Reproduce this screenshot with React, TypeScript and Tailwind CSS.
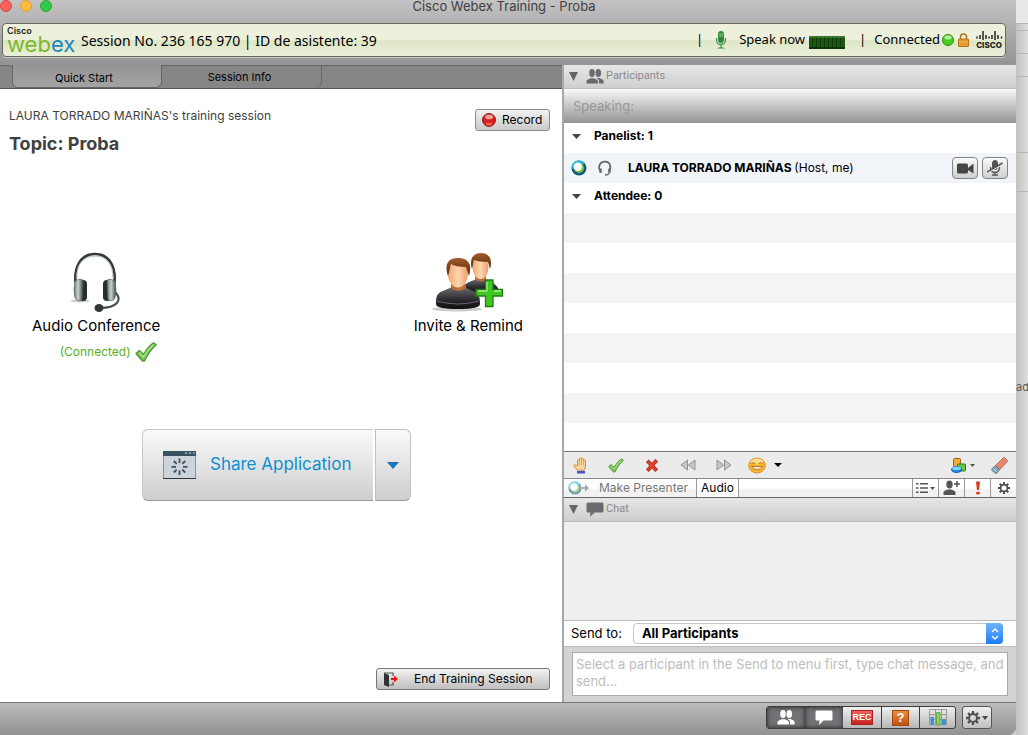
import React, { useState } from "react";

const stripes = Array.from({ length: 8 }, (_, i) => i);

function PeopleIcon({ className }: { className?: string }) {
  return (
    <svg viewBox="0 0 18 15" className={className} fill="currentColor" aria-hidden="true">
      <ellipse cx="6" cy="4" rx="2.8" ry="3.9" />
      <ellipse cx="12.300" cy="4" rx="2.8" ry="3.9" />
      <path d="M0.5 14.5v-2.3c0-1.5 2.5-2 4-3h3.400c1.500 1 4 1.500 4 3v2.3z" />
      <path d="M11 9h2.600c1.500 1 4 1.600 4 3v2.500h-4.600V12c0-1.300-.8-1.700-2-2.400z" />
    </svg>
  );
}

function BubbleIcon({ className }: { className?: string }) {
  return (
    <svg viewBox="0 0 18 15" className={className} fill="currentColor" aria-hidden="true">
      <path d="M2 .5h14q1.500 0 1.500 1.500v7q0 1.500-1.500 1.500H8.500L4 15l.5-4.500H2Q.5 10.500.5 9V2Q.5.500 2 .5z" />
    </svg>
  );
}

function Caret({ className }: { className?: string }) {
  return (
    <svg viewBox="0 0 10 6" preserveAspectRatio="none" className={className} fill="currentColor" aria-hidden="true">
      <path d="M0 0h10L5 6z" />
    </svg>
  );
}

function CheckIcon({ className }: { className?: string }) {
  return (
    <svg viewBox="0 0 22 20" className={className} aria-hidden="true">
      <path
        d="M1 11.500 4.500 8.500l4 4C11 8 14.500 3.500 18.500 .8l2.700 2C16.500 7 12.500 12.500 9.500 19H7.500z"
        fill="#7cc653"
        stroke="#4a9a35"
        strokeWidth="1.300"
        strokeLinejoin="round"
      />
      <path d="M4.500 10.500 8.500 15C11.500 9.500 14.500 6 18.500 2.800" fill="none" stroke="#b5e594" strokeWidth="1.200" />
    </svg>
  );
}

function BallIcon({ className, faded }: { className?: string; faded?: boolean }) {
  return (
    <svg viewBox="0 0 16 16" className={className} opacity={faded ? 0.55 : 1} aria-hidden="true">
      <circle cx="8" cy="8" r="7.500" fill="#0a5f78" />
      <path d="M.5 9A7.500 7.500 0 0 1 13.500 3L8 8z" fill="#22b7e2" />
      <circle cx="8" cy="8" r="5" fill="#7cbb4c" />
      <circle cx="6.800" cy="6.800" r="4.200" fill="#fff" />
    </svg>
  );
}

function SmallHeadset() {
  return (
    <svg viewBox="0 0 14 15" className="h-4 w-4" fill="none" stroke="#666" aria-hidden="true">
      <path d="M3.500 11.500C-.5 7 2 1.500 7 1.500S13.500 7 10.500 11.500" strokeWidth="1.600" />
      <path d="M2.800 8v4M11.200 8v4" strokeWidth="2.200" />
      <path d="M11 12.500Q10 14 7 14" strokeWidth="1.500" />
    </svg>
  );
}

function HeadsetArt() {
  return (
    <svg viewBox="0 0 52 62" className="h-[62px] w-[52px]" aria-hidden="true">
      <defs>
        <linearGradient id="cup" x1="0" x2="1">
          <stop offset="0" stopColor="#6d7876" />
          <stop offset=".45" stopColor="#c9d2cf" />
          <stop offset="1" stopColor="#424a4a" />
        </linearGradient>
      </defs>
      <ellipse cx="10" cy="49" rx="10" ry="1.500" fill="#ccc" />
      <path d="M5.500 31C4 14 11 2 25 2s21 12 19.500 29" fill="none" stroke="#343b3c" strokeWidth="2.600" />
      <path d="M7 26C6 13 13 4 25 4s18 9 18 22" fill="none" stroke="#b5bab9" strokeWidth="1" />
      <path d="M45 40c8 8 2 16-15 16" fill="none" stroke="#454d4d" strokeWidth="2" />
      <rect x="9" y="28" width="8" height="21" rx="4" fill="#282d2e" />
      <rect x="33" y="28" width="8" height="21" rx="4" fill="#282d2e" />
      <path d="M5 29q4-3 8-1l-1 20q-5 2-7-2-2-8 0-17z" fill="url(#cup)" stroke="#535d5c" strokeWidth=".7" />
      <path d="M45 29q-4-3-8-1l1 20q5 2 7-2 2-8 0-17z" fill="url(#cup)" stroke="#535d5c" strokeWidth=".7" />
      <ellipse cx="29" cy="56" rx="4.500" ry="4" fill="#303738" />
    </svg>
  );
}

function InviteArt() {
  return (
    <svg viewBox="0 0 72 62" className="h-[62px] w-[72px]" aria-hidden="true">
      <defs>
        <linearGradient id="shirt" x1="0" x2="0" y1="0" y2="1">
          <stop offset="0" stopColor="#6b6b70" />
          <stop offset=".6" stopColor="#29292d" />
          <stop offset="1" stopColor="#0e0e10" />
        </linearGradient>
        <linearGradient id="skin" x1="0" x2="1" y1="0" y2="0">
          <stop offset="0" stopColor="#efa66f" />
          <stop offset=".5" stopColor="#ffd5ae" />
          <stop offset="1" stopColor="#e99f69" />
        </linearGradient>
        <linearGradient id="hair" x1="0" x2="0" y1="0" y2="1">
          <stop offset="0" stopColor="#a45c2c" />
          <stop offset="1" stopColor="#54250c" />
        </linearGradient>
      </defs>
      <ellipse cx="25" cy="57" rx="25" ry="2.500" fill="#ccc" />
      <path d="M30 38c4-9 9-8 14-11h10c5 4 11 4 13 12v2H30z" fill="url(#shirt)" />
      <path d="M43 22h11v5q-5 5-11 0z" fill="#ba6c3b" />
      <ellipse cx="48.500" cy="15.500" rx="8" ry="11.500" fill="url(#skin)" />
      <path d="M40 17c-3-10 1-16 9-16s12 6 9 16l-2-7c-6 0-11-1-14-2z" fill="url(#hair)" />
      <path d="M4 52c0-8 1-11 7-13l9-4h12l9 4c6 2 7 6 7 13q0 5-22 5T4 52z" fill="url(#shirt)" />
      <path d="M5 49q21 6 42 0" fill="none" stroke="#65656a" strokeWidth="1" />
      <path d="M19 32h15v4q-7 6-15 0z" fill="#ba6c3b" />
      <ellipse cx="26" cy="22" rx="10" ry="13.500" fill="url(#skin)" />
      <path d="M16 24C12 11 17 6 26 6s15 5 11 18l-3-9c-7 0-12-1-15-3z" fill="url(#hair)" />
      <path
        d="M53.500 28h7.500v9.500h9.500V44H61v10.500h-7.500V44H44v-6.500h9.500z"
        fill="#3fc724"
        stroke="#217d12"
        strokeWidth="1.300"
      />
      <path d="M55 30v9h-9M62 39h7" fill="none" stroke="#a4f083" strokeWidth="1.300" />
    </svg>
  );
}

function WebexLogo() {
  return (
    <div className="flex w-[72px] shrink-0 flex-col font-['Inter',sans-serif]" aria-label="Cisco Webex">
      <span className="h-2 text-[9px] font-semibold leading-[8px] text-[#222]">Cisco</span>
      <span className="h-[18px] text-[22px] leading-[18px] text-[#7ab929]">
        web<span className="text-[#1b87c1]">ex</span>
      </span>
    </div>
  );
}

function CiscoLogo() {
  return (
    <div className="flex w-7 flex-col items-center">
      <svg viewBox="0 0 27 10" className="h-[10px] w-[27px]" stroke="#222" strokeWidth="1.500" aria-hidden="true">
        <path d="M1 5.500v2M4 4v4M7 0v9M10 4v4M13 5.500v2M16 4v4M19 0v9M22 4v4M25.500 5.500v2" />
      </svg>
      <span className="font-['Inter',sans-serif] text-[8px] font-extrabold leading-[9px] text-[#222]">CISCO</span>
    </div>
  );
}

function StatusBar() {
  return (
    <div className="ml-0.5 mr-[10px] flex h-[34px] shrink-0 items-center rounded border border-[#686b5c] bg-linear-to-b from-[#edf1dc] from-50% via-[#dde5c6] via-52% to-[#ebf0d8] pl-1 pr-0.5 font-['Noto_Sans','Lucida_Grande',sans-serif] text-[13px] text-black shadow-[0_1px_0_#c8c8c8]">
      <WebexLogo />
      <span className="ml-0.5 whitespace-nowrap text-[14px]">Session No. 236 165 970 | ID de asistente: 39</span>
      <div className="ml-auto flex items-center whitespace-nowrap">
        <span>|</span>
        <svg viewBox="0 0 12 18" className="ml-3 h-[18px] w-3" aria-hidden="true">
          <rect x="3" y="0" width="6" height="12" rx="3" fill="#2f8a3a" />
          <path d="M4 3h4M4 5h4" stroke="#9ecb9c" />
          <path d="M1.500 7v2a4.500 4.500 0 0 0 9 0V7M6 14v2" fill="none" stroke="#4c9653" strokeWidth="1.300" />
          <path d="M2 17.500q4-3 8 0z" fill="#2f9e3a" />
        </svg>
        <span className="ml-3">Speak now</span>
        <svg viewBox="0 0 36 13" className="ml-1 mt-1 h-[13px] w-9" aria-hidden="true">
          <rect width="36" height="13" rx="1" fill="#1d5511" />
          <path
            d="M3.500 2v10M7.500 2v10M11.500 2v10M15.500 2v10M19.500 2v10M23.500 2v10M27.500 2v10M31.500 2v10"
            stroke="#0e3a06"
          />
          <path d="M0 1h36" stroke="#5b9448" />
          <path d="M0 12h36" stroke="#0c3205" strokeWidth="2" />
        </svg>
        <span className="ml-3.5">|</span>
        <span className="ml-2">Connected</span>
        <svg viewBox="0 0 12 12" className="ml-0.5 h-3 w-3" aria-hidden="true">
          <circle cx="6" cy="6" r="5.500" fill="#43cf1d" stroke="#318c1e" />
          <ellipse cx="6" cy="3.600" rx="3.500" ry="2" fill="#b9f5a0" />
        </svg>
        <svg viewBox="0 0 11 14" className="ml-1 mr-1.5 h-3.5 w-[11px]" aria-hidden="true">
          <path d="M2.500 7V4a3 3 0 0 1 6 0v3" fill="none" stroke="#aa762c" strokeWidth="1.500" />
          <rect x=".5" y="6" width="10" height="7.500" rx=".5" fill="#e39a34" stroke="#b97219" />
          <path d="M1 9h9" stroke="#f3b65c" />
        </svg>
        <CiscoLogo />
      </div>
    </div>
  );
}

function PanelHeader({ title, icon }: { title: string; icon: React.ReactNode }) {
  return (
    <button
      type="button"
      className="flex h-6 w-full shrink-0 items-center border-b border-[#bdbdbd] bg-linear-to-b from-[#e6e6e6] to-[#cfcfcf] pl-[5px] font-['Roboto',sans-serif] text-[11px] text-[#8b8b8b]"
    >
      <Caret className="h-[9px] w-[9px] text-[#666]" />
      <span className="ml-2 mr-0.5 text-[#6b6b6b]">{icon}</span>
      {title}
    </button>
  );
}

function QuickStart() {
  return (
    <main className="flex flex-1 flex-col bg-white pb-3 text-black">
      <div className="flex items-start justify-between pl-[9px] pr-3 pt-5">
        <div className="text-[#404040]">
          <p className="text-[12px] leading-[14px]">LAURA TORRADO MARIÑAS's training session</p>
          <h1 className="mt-2.5 text-[18px] font-bold leading-[22px]">Topic: Proba</h1>
        </div>
        <button
          type="button"
          className="flex h-[22px] w-[75px] items-center gap-1.5 rounded-[3px] border border-[#8c8c8c] bg-linear-to-b from-[#f2f2f2] to-[#c9c9c9] pl-1.5 text-[12px]"
        >
          <svg viewBox="0 0 14 14" className="h-3.5 w-3.5" aria-hidden="true">
            <circle cx="7" cy="7" r="6.500" fill="#d91e1e" stroke="#902020" />
            <ellipse cx="7" cy="4" rx="4" ry="2.300" fill="#f3a09a" />
            <ellipse cx="7" cy="11" rx="3" ry="1.500" fill="#f0603f" />
          </svg>
          Record
        </button>
      </div>

      <div className="mt-[97px] flex items-start justify-between pl-8 pr-[39px]">
        <div className="flex flex-col items-center">
          <button type="button" className="flex flex-col items-center text-[15px] leading-5">
            <HeadsetArt />
            <span className="mt-0.5">Audio Conference</span>
          </button>
          <div className="mt-1.5 flex items-center gap-1 pl-6 text-[12px] text-[#5aaf1e]">
            (Connected)
            <CheckIcon className="h-5 w-[22px]" />
          </div>
        </div>
        <button type="button" className="flex flex-col items-center text-[15px] leading-5">
          <InviteArt />
          <span className="mt-0.5">Invite &amp; Remind</span>
        </button>
      </div>

      <div className="mt-[67px] flex justify-center gap-0.5 pr-[9px]">
        <button
          type="button"
          className="flex h-[72px] w-[231px] items-center rounded-l-md border border-r-0 border-[#c8c8c8] border-b-[#999] bg-linear-to-b from-[#fafafa] to-[#cecece] pl-5 text-[17px] text-[#0b8fd0]"
        >
          <svg viewBox="0 0 33 28" className="mr-3.5 h-7 w-[33px]" aria-hidden="true">
            <rect x=".5" y=".5" width="32" height="27" fill="#ccd3da" stroke="#88929a" />
            <path d="M0 0h33v5H0z" fill="#3b5260" />
            <path d="M22 2h2M26 2h2M30 2h1.500" stroke="#dde7ec" />
            <path d="M0 27.500h33" stroke="#30383e" />
            <path
              d="M16.500 7.500v4.500M16.500 19.500V24M8.500 15.800H13M20 15.800h4.500M10.800 10l2.900 2.900M19.300 18.600l2.900 2.900M22.200 10l-2.900 2.900M13.700 18.600l-2.900 2.900"
              stroke="#3c505c"
              strokeWidth="1.800"
            />
          </svg>
          Share Application
        </button>
        <button
          type="button"
          aria-label="More share options"
          className="flex h-[72px] w-9 items-center justify-center rounded-r-md border border-[#c0c0c0] border-b-[#999] bg-linear-to-b from-[#fafafa] to-[#cecece]"
        >
          <Caret className="h-[7px] w-3 text-[#1b75b8]" />
        </button>
      </div>

      <div className="mt-auto flex justify-end pr-3">
        <button
          type="button"
          className="flex h-[22px] w-[174px] items-center rounded-[3px] border border-[#777] bg-linear-to-b from-[#f2f2f2] to-[#bfbfbf] pl-1.5 text-[12px]"
        >
          <svg viewBox="0 0 15 15" className="mr-4 h-[15px] w-[15px]" aria-hidden="true">
            <path d="M1 1h9v3M10 10v3H6" fill="none" stroke="#555" strokeWidth="1.200" />
            <path d="M1 1l5 2v12l-5-2z" fill="#333" />
            <path d="M8 7h4" stroke="#e11" strokeWidth="2.200" />
            <path d="M11 3.500 15 7l-4 3.500z" fill="#e11" />
          </svg>
          End Training Session
        </button>
      </div>
    </main>
  );
}

function ParticipantList() {
  return (
    <div className="flex-1 bg-white text-[12px] font-bold text-black">
      <div className="flex h-[30px] items-center pb-1 pl-2">
        <Caret className="mr-[13px] h-[5px] w-[9px] text-[#444]" />
        Panelist: 1
      </div>
      <div className="flex h-[30px] items-center bg-[#f1f5fa] pl-[7px] pr-2">
        <BallIcon className="mr-2.5 h-4 w-4" />
        <SmallHeadset />
        <span className="ml-[15px]">
          LAURA TORRADO MARIÑAS <span className="font-normal">(Host, me)</span>
        </span>
        <button
          type="button"
          aria-label="Camera"
          className="ml-auto flex h-[22px] w-[26px] items-center justify-center rounded border border-[#858585] bg-linear-to-b from-[#fafafa] to-[#cfcfcf]"
        >
          <svg viewBox="0 0 17 11" className="h-[11px] w-[17px]" fill="#454545" aria-hidden="true">
            <rect x="0" y=".5" width="11" height="10" rx="1.500" />
            <path d="M11 5l5.500-4.500v10L11 7z" />
          </svg>
        </button>
        <button
          type="button"
          aria-label="Muted microphone"
          className="ml-1 flex h-[22px] w-[26px] items-center justify-center rounded border border-[#858585] bg-linear-to-b from-[#fafafa] to-[#cfcfcf]"
        >
          <svg viewBox="0 0 16 16" className="h-4 w-4" fill="none" stroke="#555" aria-hidden="true">
            <rect x="5.500" y="0.500" width="5" height="9" rx="2.500" fill="#555" />
            <path d="M3.500 7v1a4.500 4.500 0 0 0 9 0V7M8 12.500v2M5 15h6" strokeWidth="1.400" />
            <path d="M0 13.200 15.500 4.200" stroke="#eee" strokeWidth="1.200" />
            <path d="M0 12 15.500 3" strokeWidth="1.500" />
          </svg>
        </button>
      </div>
      <div className="flex h-[30px] items-center pb-1 pl-2">
        <Caret className="mr-[13px] h-[5px] w-[9px] text-[#444]" />
        Attendee: 0
      </div>
      {stripes.map((i) => (
        <div key={i} className={`${i % 2 === 0 ? "bg-[#f4f4f4]" : "bg-white"} ${i === 7 ? "h-7" : "h-[30px]"}`} />
      ))}
    </div>
  );
}

function FeedbackBar() {
  return (
    <div className="flex h-[27px] shrink-0 items-center border-t border-[#777] bg-[#ebebeb] pl-[9px] pr-2">
      <button type="button" aria-label="Raise hand">
        <svg viewBox="0 0 16 17" className="h-[17px] w-4" aria-hidden="true">
          <path
            d="M4 13 1 9q0-2 2-1l1.500 1V3q1-1.500 2 0V1.500q1-1.500 2 0V2q1-1.500 2 0v1.500q1-1.500 2 0V10l-1.500 3.500z"
            fill="#fad49c"
            stroke="#c08846"
            strokeWidth=".9"
          />
          <path d="M6.500 3v5M8.500 2v6M10.500 3v5" stroke="#d29b58" strokeWidth=".7" />
          <path d="M4 14h8v2.500H4z" fill="#4a54c9" />
        </svg>
      </button>
      <button type="button" aria-label="Yes" className="ml-[19px]">
        <CheckIcon className="h-[15px] w-4" />
      </button>
      <button type="button" aria-label="No" className="ml-5">
        <svg viewBox="0 0 16 16" className="h-[15px] w-4" aria-hidden="true">
          <path d="M3 3 13 13.500M13 2.500 3 13.500" stroke="#a82414" strokeWidth="4" />
          <path d="M3.500 3.500 12.500 13M12.500 3 3.500 13" stroke="#e8432b" strokeWidth="2.500" />
        </svg>
      </button>
      <button type="button" aria-label="Go slower" className="ml-5">
        <svg viewBox="0 0 16 12" className="h-3 w-4" fill="#c8c8c8" stroke="#929292" aria-hidden="true">
          <path d="M7.500 1v10L1 6zM15 1v10L8.500 6z" />
        </svg>
      </button>
      <button type="button" aria-label="Go faster" className="ml-5">
        <svg viewBox="0 0 16 12" className="h-3 w-4" fill="#c8c8c8" stroke="#929292" aria-hidden="true">
          <path d="M1 1v10l6.500-5zM8.500 1v10L15 6z" />
        </svg>
      </button>
      <button type="button" aria-label="Emoticons" className="ml-4 flex items-center">
        <svg viewBox="0 0 18 17" className="h-[17px] w-[18px]" aria-hidden="true">
          <ellipse cx="9" cy="8.500" rx="8.300" ry="7.500" fill="#f8b52c" stroke="#d98d28" />
          <ellipse cx="9" cy="4.500" rx="6" ry="3" fill="#ffe08c" />
          <path d="M3.500 6.500q2-1.500 4 0M10.500 6.500q2-1.500 4 0" fill="none" stroke="#9a5312" strokeWidth=".9" />
          <path d="M3.500 9.500h11q-1.500 3-5.500 3t-5.500-3z" fill="#fff3cf" stroke="#a65d16" strokeWidth=".8" />
        </svg>
        <Caret className="ml-2 h-1 w-2" />
      </button>
      <button type="button" aria-label="Annotation" className="ml-auto flex items-center">
        <svg viewBox="0 0 15 15" className="h-[15px] w-[15px]" aria-hidden="true">
          <rect x="2.500" y=".5" width="7" height="8" rx="1" fill="#f5ac37" stroke="#9c6311" />
          <rect x="6.500" y="6" width="8" height="7" rx="1" fill="#68c83d" stroke="#2a7c19" />
          <ellipse cx="5.500" cy="11.500" rx="5" ry="3" fill="#268ee9" stroke="#1552aa" />
          <ellipse cx="5.500" cy="10.300" rx="4.500" ry="1.800" fill="#7fd2fb" />
        </svg>
        <Caret className="ml-1 h-[3px] w-[5px] text-[#555]" />
      </button>
      <button type="button" aria-label="Clear" className="ml-4">
        <svg viewBox="0 0 17 17" className="h-[17px] w-[17px]" aria-hidden="true">
          <path d="M4.500 8.500 12 1q1-1 2 0l2 2q1 1 0 2l-7.500 8z" fill="#e8876f" stroke="#b65c49" strokeWidth=".8" />
          <path d="M1 11.500 4.500 8.500l4 4.500L6 16q-1 1-2 0l-3-2.500q-1-1 0-2z" fill="#7fa9bd" stroke="#55798c" strokeWidth=".8" />
          <path d="M2.500 11.500l3.500 3.500" stroke="#c6dfe9" strokeWidth=".8" />
        </svg>
      </button>
    </div>
  );
}

function GearIcon({ className }: { className?: string }) {
  return (
    <svg viewBox="0 0 16 16" className={className} fill="none" stroke="#4d4d4d" aria-hidden="true">
      <circle cx="8" cy="8" r="4.500" strokeWidth="2.200" />
      <path
        d="M8 0v3M8 13v3M0 8h3M13 8h3M2.300 2.300l2.200 2.200M11.500 11.500l2.200 2.200M13.700 2.300l-2.200 2.200M4.500 11.500l-2.200 2.200"
        strokeWidth="2.600"
      />
    </svg>
  );
}

function ParticipantActions() {
  return (
    <div className="flex h-5 shrink-0 items-stretch border-y border-t-[#888] border-b-[#666] bg-linear-to-b from-white from-50% to-[#f2f2f2] to-60% text-[12px]">
      <button type="button" className="flex items-center border-r border-[#999] pl-1 pr-2 text-[#777]">
        <BallIcon className="h-3.5 w-3.5" faded />
        <svg viewBox="0 0 7 8" className="mr-2.5 h-2 w-[7px]" fill="#aaa" aria-hidden="true">
          <path d="M0 3h3V0l4 4-4 4V5H0z" />
        </svg>
        Make Presenter
      </button>
      <button type="button" className="border-r border-[#999] bg-white px-1">
        Audio
      </button>
      <button
        type="button"
        aria-label="List options"
        className="ml-auto flex w-[26px] items-center justify-center gap-0.5 border-l border-[#999] text-[#555]"
      >
        <svg viewBox="0 0 12 12" className="h-3 w-3" stroke="currentColor" strokeWidth="1.500" aria-hidden="true">
          <path d="M0 1.800h2.500M4 1.800h8M0 6h2.500M4 6h8M0 10.200h2.500M4 10.200h8" />
        </svg>
        <Caret className="h-[3px] w-[5px]" />
      </button>
      <button
        type="button"
        aria-label="Add participant"
        className="flex w-[26px] items-center justify-center border-l border-[#999]"
      >
        <svg viewBox="0 0 18 16" className="h-4 w-[18px]" fill="#555" aria-hidden="true">
          <ellipse cx="6.500" cy="4.500" rx="3.200" ry="4" />
          <path d="M.5 15v-2.500c0-2 3-2 4.200-3h3.600c1.200 1 4.200 1 4.200 3V15z" />
          <path d="M13.200 1h1.600v2.200H17v1.600h-2.200V7h-1.600V4.800H11V3.200h2.200z" />
        </svg>
      </button>
      <button
        type="button"
        aria-label="Alert"
        className="flex w-[26px] items-center justify-center border-l border-[#999]"
      >
        <svg viewBox="0 0 6 14" className="h-3.5 w-1.5" fill="#dc3a1c" aria-hidden="true">
          <path d="M1 1q2-1.500 4 0L4 9H2z" />
          <ellipse cx="3" cy="12" rx="2" ry="1.600" />
        </svg>
      </button>
      <button
        type="button"
        aria-label="Participant settings"
        className="flex w-[26px] items-center justify-center border-l border-[#999]"
      >
        <GearIcon className="h-3 w-3" />
      </button>
    </div>
  );
}

function Chat() {
  const [message, setMessage] = useState("");

  return (
    <>
      <PanelHeader title="Chat" icon={<BubbleIcon className="h-[15px] w-[18px]" />} />
      <div className="h-[98px] shrink-0 bg-[#efefef]" />
      <div className="flex h-[27px] shrink-0 items-center border-y border-t-[#bbb] border-b-[#bbb] bg-white pl-[7px] pr-[13px] text-[13px] text-black">
        <label htmlFor="send-to">Send to:</label>
        <div className="relative ml-[11px] flex-1">
          <select
            id="send-to"
            className="block h-[21px] w-full appearance-none rounded border border-[#c4c4c4] bg-white pl-2 text-[13px] font-bold"
          >
            <option>All Participants</option>
          </select>
          <span className="pointer-events-none absolute inset-y-0 right-0 flex w-[17px] items-center justify-center rounded-r bg-linear-to-b from-[#6cb3fa] to-[#1a7cf5]">
            <svg viewBox="0 0 8 12" className="h-3 w-2" fill="none" stroke="#fff" strokeWidth="1.400" aria-hidden="true">
              <path d="M1 4l3-3 3 3M1 8l3 3 3-3" />
            </svg>
          </span>
        </div>
      </div>
      <div className="flex h-[55px] shrink-0 bg-[#d3d3d3] px-2 pb-1.5 pt-[5px]">
        <textarea
          aria-label="Chat message"
          value={message}
          onChange={(e) => setMessage(e.target.value)}
          placeholder="Select a participant in the Send to menu first, type chat message, and send..."
          className="w-full resize-none overflow-hidden border border-[#aaa] bg-white py-[3px] pl-[3px] text-[13px] leading-[17px] placeholder:text-[#bdbdbd]"
        />
      </div>
    </>
  );
}

function Footer() {
  return (
    <footer className="flex h-[33px] shrink-0 items-start justify-end border-t border-[#777] bg-linear-to-b from-[#bcbcbc] to-[#929292] pr-6 pt-[3px]">
      <div className="flex h-[23px] overflow-hidden rounded-[3px] border border-[#3c3c3c] bg-linear-to-b from-[#f0f0f0] to-[#b6b6b6]">
        <button
          type="button"
          aria-label="Participants panel"
          className="flex w-[38px] items-center justify-center bg-[#727276] text-white shadow-[inset_0_0_4px_#222]"
        >
          <PeopleIcon className="h-[15px] w-[18px]" />
        </button>
        <button
          type="button"
          aria-label="Chat panel"
          className="flex w-[38px] items-center justify-center bg-[#727276] text-white shadow-[inset_0_0_4px_#222]"
        >
          <BubbleIcon className="h-[15px] w-[18px]" />
        </button>
        <button type="button" className="flex w-[38px] items-center justify-center">
          <span className="flex h-[15px] w-[22px] items-center justify-center border border-[#b02020] bg-linear-to-b from-[#ee625c] to-[#c81e1e] font-['Liberation_Sans',sans-serif] text-[9px] font-bold text-white">
            REC
          </span>
        </button>
        <button type="button" className="flex w-[38px] items-center justify-center border-l border-[#3c3c3c]">
          <span className="flex h-4 w-[17px] items-center justify-center border border-[#a04a12] bg-linear-to-b from-[#f08a3c] to-[#bd5312] font-['Liberation_Sans',sans-serif] text-[13px] font-bold text-white">
            ?
          </span>
        </button>
        <button
          type="button"
          aria-label="Polling"
          className="flex w-9 items-center justify-center border-l border-[#3c3c3c]"
        >
          <svg viewBox="0 0 18 17" className="h-[17px] w-[18px]" aria-hidden="true">
            <path d="M.5.5h17v15H.5zM6.500 0v16M12.500 0v16M0 5.500h18M0 10.500h18" fill="none" stroke="#999" />
            <path d="M1.500 8h3.500v8H1.500zM13 10.500h4V16h-4z" fill="#3f8fd6" />
            <path d="M7.500 3.500h3.500V16H7.500z" fill="#86d45e" stroke="#4fa638" strokeWidth=".8" />
          </svg>
        </button>
      </div>
      <button
        type="button"
        aria-label="Panel settings"
        className="ml-1.5 flex h-[23px] w-[30px] items-center justify-center gap-0.5 rounded-[3px] border border-[#555] bg-linear-to-b from-[#f0f0f0] to-[#c0c0c0]"
      >
        <GearIcon className="h-3.5 w-3.5" />
        <Caret className="h-1 w-1.5 text-[#444]" />
      </button>
    </footer>
  );
}

// sliver of the window that sits behind this one
function BackWindow() {
  return (
    <aside className="flex w-3 shrink-0 flex-col overflow-hidden bg-linear-to-r from-[#c2c2c2] to-[#dedede] text-[11px] text-[#555]">
      <div className="h-6 border-b border-[#b5b5b5] bg-[#e9e9e9]" />
      <div className="h-[7px] border-b border-[#b5b5b5]" />
      <div className="h-[23px] border-b border-[#b5b5b5]" />
      <div className="h-[23px] border-b border-[#b5b5b5]" />
      <div className="h-[76px] border-b border-[#b5b5b5]" />
      <div className="h-[39px] border-b border-[#b5b5b5]" />
      <span className="mt-[187px]">ad</span>
    </aside>
  );
}

export default function App() {
  return (
    <div className="flex min-h-screen w-full overflow-hidden bg-[#d0d0d0] font-['Inter','Liberation_Sans',sans-serif]">
      <div className="flex min-w-0 flex-1 flex-col overflow-hidden rounded-br-lg bg-[#969696]">
        <div className="flex flex-col bg-linear-to-b from-[#c3c3c3] to-[#949494] pb-2">
          <header className="h-[23px]">
            <div className="grid h-2 grid-cols-[1fr_auto_1fr] items-center">
              <div className="flex gap-2">
                <span className="h-3 w-3 rounded-full border border-[#df4744] bg-[#fc605c]" />
                <span className="h-3 w-3 rounded-full border border-[#de9f34] bg-[#fdbc40]" />
                <span className="h-3 w-3 rounded-full border border-[#27aa35] bg-[#34c84a]" />
              </div>
              <span className="pr-2 text-[13px] leading-[8px] text-[#404040]">Cisco Webex Training - Proba</span>
            </div>
          </header>
          <StatusBar />
        </div>

        <div className="flex flex-1">
          <div className="flex min-w-0 flex-[562] flex-col">
            <nav className="flex h-6 shrink-0 border-b border-[#555] bg-[#868686] text-[11px] text-black">
              <span className="w-3 rounded-tr border-t border-[#666]" />
              <button
                type="button"
                className="w-[150px] rounded-b-md border-x border-b border-[#666] bg-linear-to-b from-[#949494] to-[#a3a3a3] pr-1.5 pt-1"
              >
                Quick Start
              </button>
              <button type="button" className="w-40 rounded-br-md border-r border-t border-[#666] pr-1">
                Session Info
              </button>
              <span className="flex-1 border-t border-[#666]" />
            </nav>
            <QuickStart />
          </div>
          <div className="w-0.5 shrink-0 bg-[#a8a8a8]" />
          <section className="flex min-w-0 flex-[452] flex-col">
            <PanelHeader title="Participants" icon={<PeopleIcon className="h-[15px] w-[18px]" />} />
            <div className="flex h-[34px] shrink-0 items-center bg-linear-to-b from-[#fafafa] to-[#949494] pl-[9px] pt-0.5 text-[13px] text-[#979797]">
              Speaking:
            </div>
            <ParticipantList />
            <FeedbackBar />
            <ParticipantActions />
            <Chat />
          </section>
        </div>
        <Footer />
      </div>
      <BackWindow />
    </div>
  );
}
